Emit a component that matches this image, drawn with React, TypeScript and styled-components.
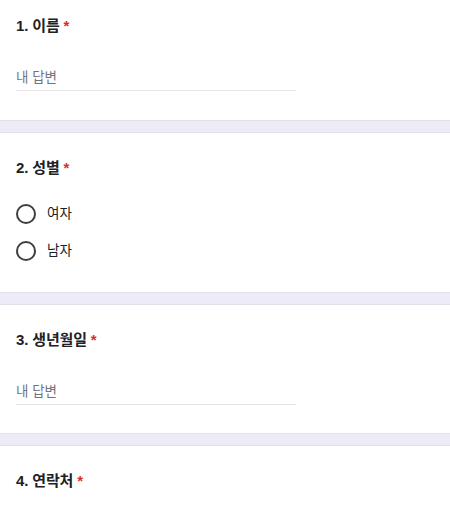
import styled, { createGlobalStyle } from 'styled-components';

const GlobalStyle = createGlobalStyle`
  * {
    box-sizing: border-box;
  }

  body {
    margin: 0;
    background: #ffffff;
    font-family: 'Liberation Sans', 'Noto Sans CJK KR', sans-serif;
    color: #202124;
  }
`;

const Form = styled.div`
  width: 450px;
  display: flex;
  flex-direction: column;
`;

interface ICard {
  $first?: boolean;
}

const Card = styled.section<ICard>`
  background: #ffffff;
  padding: ${props => (props.$first ? '15px 16px 0' : '24px 16px 0')};
`;

const Divider = styled.div`
  height: 13px;
  background: #edebf8;
  border-top: 1px solid #e2e1ea;
  border-bottom: 1px solid #e2e1ea;
`;

const Title = styled.h2`
  margin: 0;
  font-size: 15px;
  font-weight: 700;
  line-height: 22px;
  letter-spacing: -0.01em;
  color: #202124;

  span {
    color: #d93025;
    margin-left: 4px;
  }
`;

const AnswerField = styled.div`
  width: 280px;
  margin-top: 31px;
  padding-bottom: 2px;
  border-bottom: 1px solid #e5e5e5;
  font-size: 13.5px;
  line-height: 20px;
  color: #70757a;
`;

interface IFieldWrap {
  $bottom: number;
}

const FieldWrap = styled.div<IFieldWrap>`
  padding-bottom: ${props => props.$bottom}px;
`;

const Options = styled.div`
  display: flex;
  flex-direction: column;
  gap: 17px;
  margin-top: 25px;
  padding-bottom: 31px;
`;

const Option = styled.label`
  display: flex;
  align-items: center;
  gap: 11px;
  font-size: 13.5px;
  line-height: 20px;
  color: #202124;
`;

const Radio = styled.span`
  width: 20px;
  height: 20px;
  border-radius: 50%;
  border: 2px solid #3c4043;
  flex-shrink: 0;
`;

const Required = () => <span>*</span>;

const App = () => {
  return (
    <Form>
      <GlobalStyle />
      <Card $first>
        <Title>
          1. 이름<Required />
        </Title>
        <FieldWrap $bottom={29}>
          <AnswerField>내 답변</AnswerField>
        </FieldWrap>
      </Card>
      <Divider />
      <Card>
        <Title>
          2. 성별<Required />
        </Title>
        <Options>
          <Option>
            <Radio />
            여자
          </Option>
          <Option>
            <Radio />
            남자
          </Option>
        </Options>
      </Card>
      <Divider />
      <Card>
        <Title>
          3. 생년월일<Required />
        </Title>
        <FieldWrap $bottom={28}>
          <AnswerField>내 답변</AnswerField>
        </FieldWrap>
      </Card>
      <Divider />
      <Card>
        <Title>
          4. 연락처<Required />
        </Title>
        <FieldWrap $bottom={60} />
      </Card>
    </Form>
  );
};

export default App;
